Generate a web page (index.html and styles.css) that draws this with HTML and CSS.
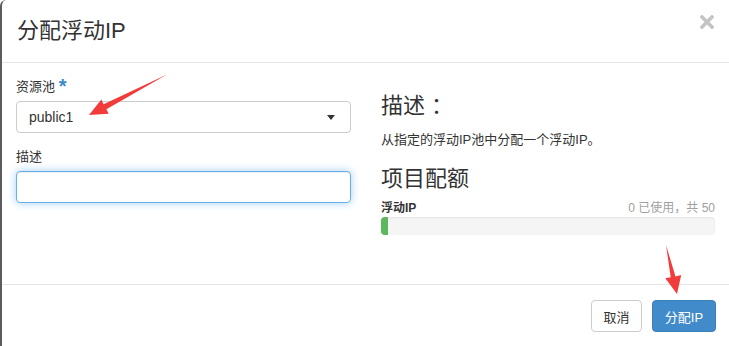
FILE: index.html
```
<!DOCTYPE html>
<html lang="zh-CN">
<head>
<meta charset="utf-8">
<title>分配浮动IP</title>
<link rel="stylesheet" href="styles.css">
</head>
<body>
<div class="modal">
  <div class="modal-header">
    <h4 class="modal-title">分配浮动IP</h4>
    <button class="close" type="button" aria-label="关闭">
      <svg width="14" height="14" viewBox="0 0 14 14"><path d="M2 2 L12 12 M12 2 L2 12" stroke="#c4c4c4" stroke-width="3.6" stroke-linecap="square"/></svg>
    </button>
  </div>
  <div class="modal-body">
    <div class="col col-left">
      <div class="form-group">
        <label class="label">资源池 <span class="req">*</span></label>
        <div class="select">
          <span class="select-value">public1</span>
          <span class="caret"></span>
        </div>
      </div>
      <div class="form-group">
        <label class="label">描述</label>
        <div class="input focus"></div>
      </div>
    </div>
    <div class="col col-right">
      <h3 class="heading first">描述 ：</h3>
      <p class="desc">从指定的浮动IP池中分配一个浮动IP。</p>
      <h3 class="heading second">项目配额</h3>
      <div class="quota-row">
        <strong class="quota-name">浮动IP</strong>
        <span class="quota-usage">0 已使用，共 50</span>
      </div>
      <div class="progress"><div class="progress-bar" style="width:7px"></div></div>
    </div>
  </div>
  <div class="modal-footer">
    <button class="btn btn-default" type="button">取消</button>
    <button class="btn btn-primary" type="button">分配IP</button>
  </div>
  <svg class="annotations" width="729" height="346" viewBox="0 0 729 346">
    <polygon fill="#f23b3b" points="89,115 101.3,99.5 103.6,104.2 167,74.5 106.4,109.3 108.7,113.7"/>
    <polygon fill="#f23b3b" points="677,294 665.3,278.2 670.7,277.2 666,245 675.5,276.4 681.2,275"/>
  </svg>
</div>
</body>
</html>
```
FILE: styles.css
```
* { box-sizing: border-box; }
html, body { margin: 0; padding: 0; background: #fff; }
body {
  font-family: "Liberation Sans", "Noto Sans CJK SC", sans-serif;
  color: #333;
  width: 729px;
  height: 346px;
  overflow: hidden;
}
.modal {
  position: relative;
  width: 729px;
  height: 346px;
  border-left: 2px solid #5c5c5c;
  border-top-left-radius: 6px;
  background: #fff;
}
.modal-header {
  height: 63px;
  border-bottom: 1px solid #e5e5e5;
  display: flex;
  align-items: center;
  justify-content: space-between;
  padding: 0 15px 0 15px;
}
.modal-title {
  margin: 0;
  font-size: 22px;
  font-weight: normal;
  line-height: 30px;
  color: #333;
}
.close {
  border: 0;
  background: none;
  padding: 0;
  margin-top: -18px;
  width: 14px;
  height: 14px;
  display: flex;
}
.modal-body {
  height: 221px;
  display: grid;
  grid-template-columns: 335px 334px;
  column-gap: 30px;
  padding: 15px 14px 0 14px;
}
.form-group { margin-bottom: 15px; }
.label {
  display: block;
  font-size: 13px;
  line-height: 18px;
  margin-bottom: 5px;
  color: #333;
}
.req {
  color: #3a87c8;
  font-weight: bold;
  font-size: 20px;
  line-height: 10px;
  vertical-align: -2px;
}
.select {
  height: 32px;
  border: 1px solid #ccc;
  border-radius: 4px;
  display: flex;
  align-items: center;
  justify-content: space-between;
  padding: 0 15px 0 12px;
  font-size: 14px;
}
.caret {
  width: 0;
  height: 0;
  border-left: 4px solid transparent;
  border-right: 4px solid transparent;
  border-top: 5px solid #333;
}
.input {
  height: 32px;
  border: 1px solid #66afe9;
  border-radius: 4px;
  box-shadow: inset 0 1px 1px rgba(0,0,0,.075), 0 0 8px rgba(102,175,233,.6);
  margin-top: 1px;
}
.heading {
  margin: 0;
  font-size: 22px;
  font-weight: normal;
  line-height: 26px;
  color: #333;
}
.heading.first { margin-top: 15px; }
.heading.second { margin-top: 17px; }
.desc {
  margin: 12px 0 0 0;
  font-size: 13px;
  line-height: 18px;
}
.quota-row {
  margin-top: 8px;
  display: flex;
  justify-content: space-between;
  font-size: 12px;
  line-height: 16px;
}
.quota-name { font-weight: bold; }
.quota-usage { color: #a0a0a0; }
.progress {
  margin-top: 1px;
  height: 18px;
  background: #f5f5f5;
  border-radius: 4px;
  box-shadow: inset 0 1px 2px rgba(0,0,0,.08);
  overflow: hidden;
}
.progress-bar {
  height: 100%;
  background: #5cb85c;
}
.modal-footer {
  border-top: 1px solid #e5e5e5;
  padding: 15px 13px 0 0;
  display: flex;
  justify-content: flex-end;
  gap: 10px;
}
.btn {
  height: 32px;
  font-family: "Liberation Sans", "Noto Sans CJK SC", sans-serif;
  font-size: 13px;
  border-radius: 4px;
  padding: 0;
  white-space: nowrap;
  border: 1px solid #ccc;
  background: #fff;
  color: #333;
}
.btn-default { width: 51px; }
.btn-primary {
  width: 64px;
  background: #428bca;
  border-color: #3b7fba;
  color: #fff;
}
.annotations {
  position: absolute;
  left: -2px;
  top: 0;
  pointer-events: none;
}
```
